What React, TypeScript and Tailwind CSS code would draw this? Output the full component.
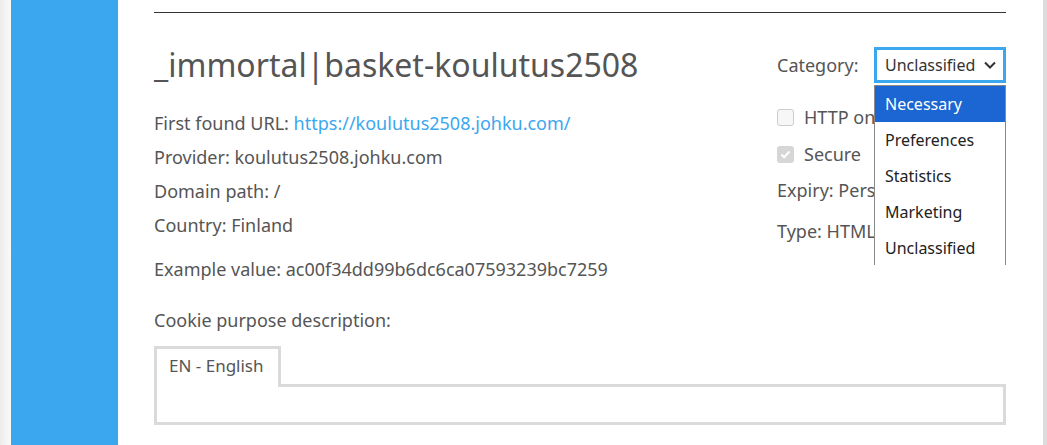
import React from "react";

const font = { fontFamily: '"Noto Sans", "Open Sans", sans-serif' };

export default function App() {
  return (
    <div className="flex h-[445px] w-full overflow-hidden bg-white text-[#555]" style={font}>
      <div className="w-[11px] shrink-0 bg-gradient-to-r from-[#ececec] to-[#fafafa]" />
      <div className="w-[107px] shrink-0 bg-[#3ba7ee]" />
      <div className="flex-1 pl-[36px] pr-[37px]">
        <div className="mt-[12px] border-t border-[#333]" />
        <div className="flex">
          <div className="flex-1">
            <h1 className="mt-[32px] text-[32px] leading-[40px] text-[#555]">_immortal|basket-koulutus2508</h1>
            <div className="mt-[26px] flex flex-col gap-[9px] text-[18px] leading-[25px]">
              <div>
                First found URL: <span className="text-[#3ba7ee]">https://koulutus2508.johku.com/</span>
              </div>
              <div>Provider: koulutus2508.johku.com</div>
              <div>Domain path: /</div>
              <div>Country: Finland</div>
              <div className="mt-[10px]">Example value: ac00f34dd99b6dc6ca07593239bc7259</div>
            </div>
            <div className="mt-[26px] text-[18px] leading-[25px]">Cookie purpose description:</div>
          </div>
          <div className="relative w-[229px] shrink-0 pt-[34px]">
            <div className="flex items-center">
              <span className="w-[97px] text-[18px]">Category:</span>
              <div className="flex h-[36px] w-[132px] items-center justify-between border-[3px] border-[#3ba7ee] pl-[8px] pr-[6px] text-[16px] text-[#333]">
                <span>Unclassified</span>
                <svg width="14" height="14" viewBox="0 0 14 14" fill="none">
                  <path d="M2 4.5 L7 9.5 L12 4.5" stroke="#333" strokeWidth="2" />
                </svg>
              </div>
            </div>
            <div className="mt-[22px] flex flex-col text-[18px] leading-[25px]">
              <label className="flex items-center gap-[10px]">
                <span className="h-[17px] w-[17px] shrink-0 rounded-[3px] border border-[#ccc] bg-[#f7f7f7]" />
                <span className="whitespace-nowrap">HTTP only</span>
              </label>
              <label className="mt-[12px] flex items-center gap-[10px]">
                <span className="flex h-[17px] w-[17px] shrink-0 items-center justify-center rounded-[3px] bg-[#d6d6d6]">
                  <svg width="13" height="13" viewBox="0 0 13 13" fill="none">
                    <path d="M2.5 6.5 L5.2 9.2 L10.5 3.5" stroke="#fff" strokeWidth="2" />
                  </svg>
                </span>
                <span>Secure</span>
              </label>
              <div className="mt-[11px] whitespace-nowrap">Expiry: Persistent</div>
              <div className="mt-[16px] whitespace-nowrap">Type: HTML</div>
            </div>
            <div className="absolute left-[97px] top-[72px] z-20 h-[180px] w-[132px] overflow-hidden border-x border-t border-[#8a8a8a] bg-white text-[16px] text-[#222]">
              <div className="flex h-[36px] items-center bg-[#1b66d2] pl-[10px] text-white">Necessary</div>
              <div className="flex h-[36px] items-center pl-[10px]">Preferences</div>
              <div className="flex h-[36px] items-center pl-[10px]">Statistics</div>
              <div className="flex h-[36px] items-center pl-[10px]">Marketing</div>
              <div className="flex h-[36px] items-center pl-[10px]">Unclassified</div>
            </div>
          </div>
        </div>
        <div className="mt-[13px]">
          <div className="relative z-10 -mb-[3px] h-[41px] w-[127px] border-[3px] border-b-0 border-[#dadada] bg-white pl-[12px] pt-[4px] text-[17px] leading-[25px]">
            EN - English
          </div>
          <div className="h-[41px] border-[3px] border-[#dadada]" />
        </div>
      </div>
      <div className="w-[4px] shrink-0 bg-[#dcdcdc]" />
    </div>
  );
}
